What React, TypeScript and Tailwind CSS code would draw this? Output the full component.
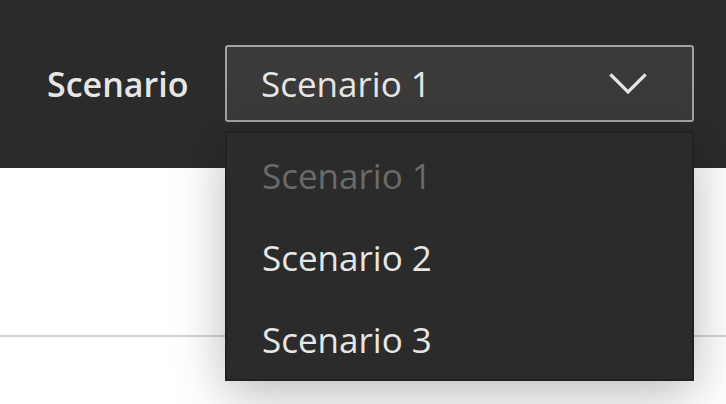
const OPTIONS = ['Scenario 1', 'Scenario 2', 'Scenario 3'];

function Chevron() {
  return (
    <svg width="38" height="24" viewBox="0 0 38 24" fill="none" className="block">
      <path d="M2.5 3.5 L19 20 L35.5 3.5" stroke="#e6e6e6" strokeWidth="3.2" strokeLinecap="square" />
    </svg>
  );
}

export default function App() {
  const selected = 'Scenario 1';

  return (
    <div
      className="relative h-[404px] w-[726px] overflow-hidden bg-white"
      style={{ fontFamily: '"Open Sans", "Noto Sans", sans-serif' }}
    >
      <div className="flex h-[168px] items-start bg-[#2b2b2b] pl-[47px] pt-[45px]">
        <div className="flex h-[77px] w-[178px] items-center pt-[2px] text-[34px] font-semibold text-[#e6e6e6]">
          Scenario
        </div>
        <button
          type="button"
          className="flex h-[77px] w-[469px] items-center justify-between rounded-[3px] border-2 border-[#a3a3a3] bg-[#3b3a39] pl-[34px] pr-[45px] text-[35px] text-[#e6e6e6]"
        >
          <span className="pt-[2px]">{selected}</span>
          <Chevron />
        </button>
      </div>
      <div className="mt-[167px] h-[2px] w-full bg-[#d4d4d4]" />

      <ul className="absolute left-[225px] top-[131px] w-[469px] border-2 border-black/20 bg-[#2b2b2b] shadow-[0_12px_48px_rgba(0,0,0,0.28)]">
        {OPTIONS.map((o) => (
          <li
            key={o}
            className={`flex h-[82px] items-center pl-[35px] pt-[5px] text-[35px] ${
              o === selected ? 'text-[#6a6a6a]' : 'text-[#e6e6e6]'
            }`}
          >
            {o}
          </li>
        ))}
      </ul>
    </div>
  );
}
